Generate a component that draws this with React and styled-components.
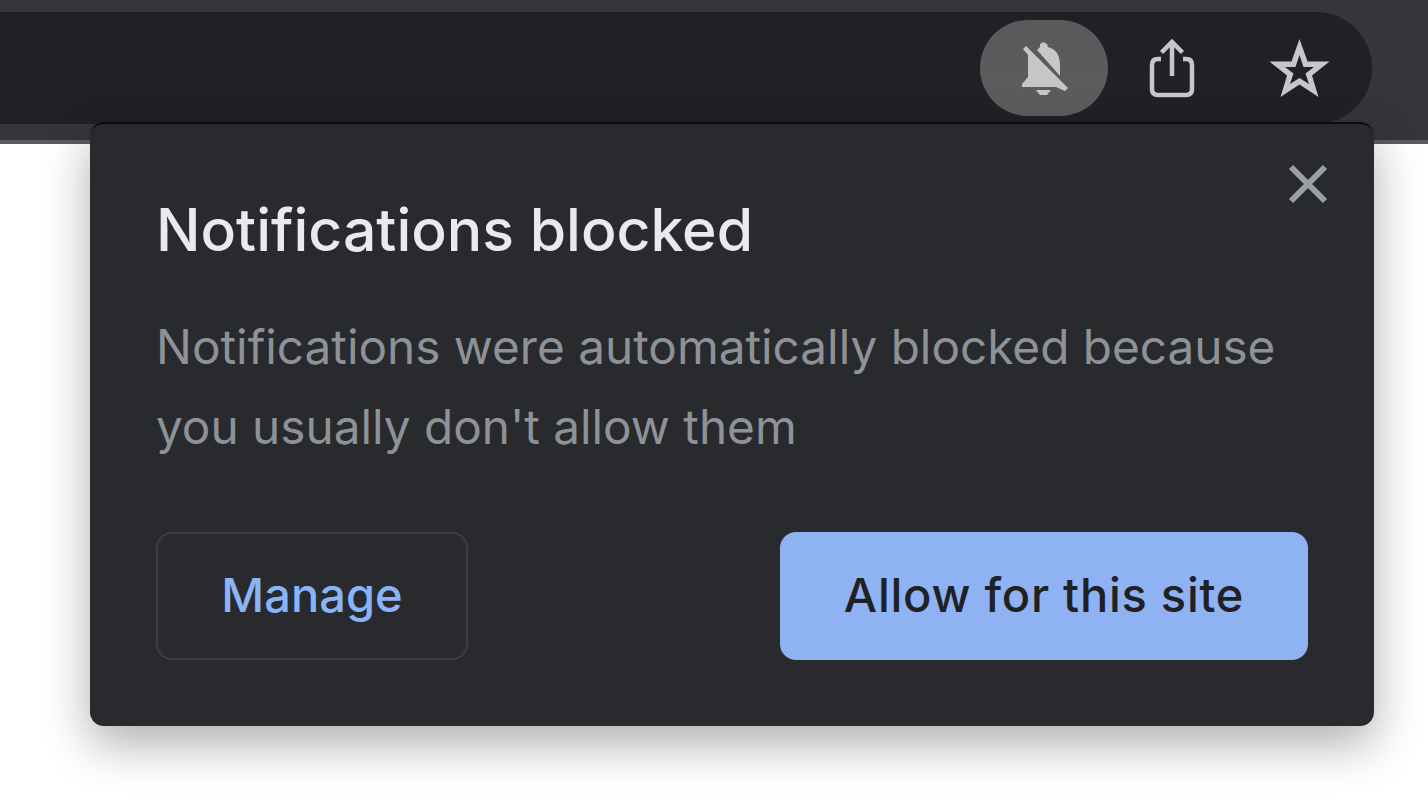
import { createGlobalStyle, styled } from 'styled-components';

const GlobalStyle = createGlobalStyle`
  html, body, #root {
    margin: 0;
    height: 100%;
  }
  body {
    background: #fff;
    overflow: hidden;
    font-family: Inter, "Liberation Sans", sans-serif;
  }
`;

const Page = styled.div`
  position: relative;
  width: 1428px;
  height: 804px;
  overflow: hidden;
`;

const Toolbar = styled.header`
  box-sizing: border-box;
  height: 144px;
  padding: 12px 56px 16px 0;
  background: #35363a;
  border-bottom: 4px solid #5b5c5f;
`;

const AddressBar = styled.div`
  display: flex;
  justify-content: flex-end;
  align-items: center;
  height: 112px;
  padding-right: 8px;
  box-sizing: border-box;
  background: #202124;
  border-radius: 0 56px 56px 0;
`;

const IconButton = styled.div`
  display: flex;
  align-items: center;
  justify-content: center;
  width: 128px;
  height: 96px;
  border-radius: 48px;
  background: ${(p) => (p.$active ? 'linear-gradient(#58595b, #5c5d5f)' : 'transparent')};
  color: #c6c7c8;
`;

const Bubble = styled.section`
  position: absolute;
  left: 90px;
  top: 122px;
  box-sizing: border-box;
  width: 1284px;
  height: 604px;
  padding: 72px 66px 66px;
  display: flex;
  flex-direction: column;
  background: #292a2d;
  border-top: 2px solid #0b0b0c;
  border-radius: 14px;
  box-shadow: 0 18px 48px rgba(0, 0, 0, 0.32);
`;

const CloseButton = styled.div`
  position: absolute;
  top: 40px;
  right: 46px;
  width: 40px;
  height: 40px;
  color: #9aa0a6;
`;

const Title = styled.h1`
  margin: 0;
  font-size: 58.900px;
  line-height: 68px;
  font-weight: 450;
  color: #e8eaed;
`;

const Message = styled.p`
  margin: 43px 0 0;
  font-size: 47.700px;
  line-height: 80px;
  font-weight: 400;
  color: #8e9297;
`;

const Actions = styled.div`
  display: flex;
  justify-content: space-between;
  margin-top: auto;
`;

const ActionButton = styled.button`
  box-sizing: border-box;
  width: ${(p) => (p.$primary ? '528px' : '312px')};
  height: 128px;
  padding: 0 0 4px;
  border: 2px solid ${(p) => (p.$primary ? '#8fb2f2' : '#3c3d41')};
  border-radius: 16px;
  background: ${(p) => (p.$primary ? '#8fb2f2' : 'transparent')};
  color: ${(p) => (p.$primary ? '#202124' : '#8ab4f8')};
  font-family: inherit;
  font-size: 47px;
  font-weight: 500;
  letter-spacing: ${(p) => (p.$primary ? '0.75px' : '0')};
`;

const BellOffIcon = () => (
  <svg width="56" height="60" viewBox="1016 38 56 60" fill="currentColor">
    <path d="M1037 50 L1040 47 L1040 44 L1043.500 42 L1047 44 L1048 47 Q1060 50 1060 65 L1060 76 Z" />
    <path d="M1023 49 L1026 46 L1068 88 L1065 91 L1056 87 L1022 87 L1022 84 L1028 77 L1028 55 Z" />
    <path d="M1036 90 L1051 90 L1047 95 L1040 95 Z" />
  </svg>
);

const ShareIcon = () => (
  <svg width="48" height="60" viewBox="1148 39 48 60" fill="none" stroke="currentColor" strokeWidth="4.500">
    <path d="M1161 60 L1158 60 Q1152 60 1152 66 L1152 90 Q1152 96 1158 96 L1186 96 Q1192 96 1192 90 L1192 66 Q1192 60 1186 60 L1183 60" />
    <path d="M1172 77 L1172 43" />
    <path d="M1161.500 53.500 L1172 43 L1182.500 53.500" />
  </svg>
);

const StarIcon = () => (
  <svg width="64" height="62" viewBox="1268 36 64 62" fill="currentColor" fillRule="evenodd">
    <path d="M1299.500 38 L1307.500 60.500 L1329.500 60.500 L1312 74.500 L1318.500 96 L1299.500 83.500 L1280.500 96 L1287 74.500 L1269.500 60.500 L1291.500 60.500 Z M1299.500 54 L1295.500 66 L1285 66 L1293.500 72.500 L1290 83 L1299.500 77 L1309 83 L1305.500 72.500 L1314 66 L1303.500 66 Z" />
  </svg>
);

const CloseIcon = () => (
  <svg width="40" height="40" viewBox="0 0 40 40" stroke="currentColor" strokeWidth="6" fill="none">
    <path d="M3 3 L37 37 M37 3 L3 37" />
  </svg>
);

const App = () => {
  return (
    <Page>
      <GlobalStyle />
      <Toolbar>
        <AddressBar>
          <IconButton $active>
            <BellOffIcon />
          </IconButton>
          <IconButton>
            <ShareIcon />
          </IconButton>
          <IconButton>
            <StarIcon />
          </IconButton>
        </AddressBar>
      </Toolbar>
      <Bubble>
        <CloseButton>
          <CloseIcon />
        </CloseButton>
        <Title>Notifications blocked</Title>
        <Message>
          Notifications were automatically blocked because
          <br />
          you usually don't allow them
        </Message>
        <Actions>
          <ActionButton>Manage</ActionButton>
          <ActionButton $primary>Allow for this site</ActionButton>
        </Actions>
      </Bubble>
    </Page>
  );
};

export default App;
